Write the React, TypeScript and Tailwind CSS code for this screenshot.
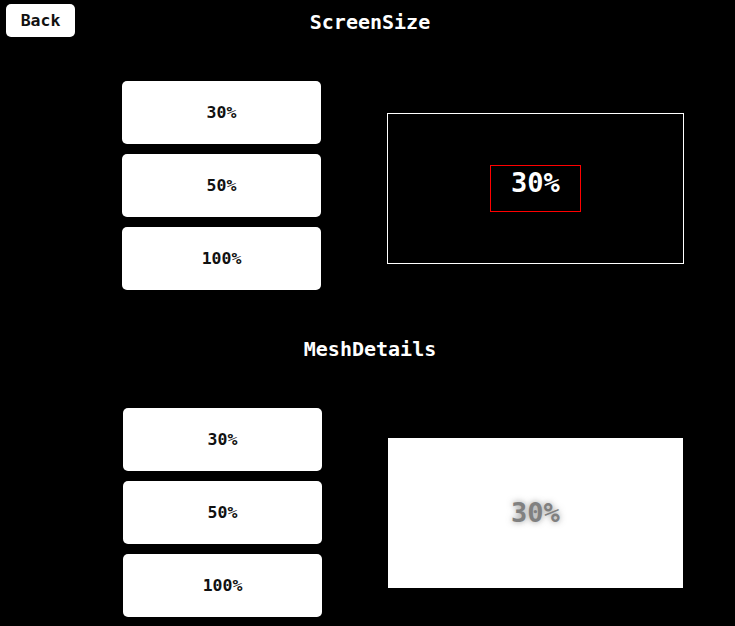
import React from "react";

const mono = "font-['DejaVu_Sans_Mono',monospace] font-bold";

function OptionButtons() {
  return (
    <div className="flex flex-col gap-[10px] w-[199px]">
      {["30%", "50%", "100%"].map((t) => (
        <button
          key={t}
          className={`h-[63px] w-full rounded-[5px] bg-white text-[#111] text-[16.5px] pt-[2px] ${mono} flex items-center justify-center`}
        >
          {t}
        </button>
      ))}
    </div>
  );
}

function Heading({ children }: { children: React.ReactNode }) {
  return (
    <div className="h-[44px] flex items-center justify-center pl-[5px]">
      <h2 className={`text-white text-[20px] leading-none ${mono}`}>{children}</h2>
    </div>
  );
}

export default function App() {
  return (
    <div className="h-screen w-full overflow-hidden bg-black">
      {/* Section 1 */}
      <section className="h-[327px]">
        <div className="grid grid-cols-[1fr_auto_1fr] h-[44px]">
          <div className="pl-[6px] pt-[4px]">
            <button
              className={`w-[69px] h-[33px] rounded-[5px] bg-white text-[#111] text-[16.5px] pt-[2px] ${mono} flex items-center justify-center`}
            >
              Back
            </button>
          </div>
          <div className="flex items-center justify-center pl-[5px]">
            <h1 className={`text-white text-[20px] leading-none ${mono}`}>ScreenSize</h1>
          </div>
          <div />
        </div>
        <div className="flex items-start pl-[122px] gap-[66px] mt-[37px]">
          <OptionButtons />
          <div className="mt-[32px] w-[297px] h-[151px] border border-white flex items-center justify-center">
            <div className="w-[91px] h-[47px] border border-[#ff0000] flex justify-center items-start pt-[5px]">
              <span className={`text-white text-[27px] leading-[23px] ${mono}`}>30%</span>
            </div>
          </div>
        </div>
      </section>

      {/* Section 2 */}
      <section className="h-[327px]">
        <Heading>MeshDetails</Heading>
        <div className="flex items-start pl-[123px] gap-[66px] mt-[37px]">
          <OptionButtons />
          <div className="mt-[30px] w-[295px] h-[150px] bg-white flex items-center justify-center">
            <span
              className={`text-[#808080] text-[27px] ${mono} [text-shadow:0_0_6px_rgba(120,120,120,0.8)]`}
            >
              30%
            </span>
          </div>
        </div>
      </section>
    </div>
  );
}
